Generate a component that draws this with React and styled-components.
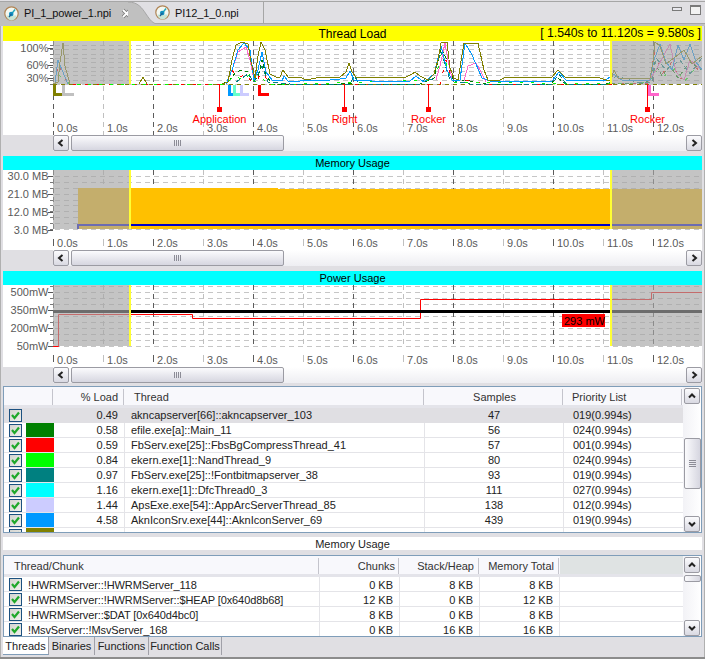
import React from "react";
import styled, { createGlobalStyle } from "styled-components";

const GlobalStyle = createGlobalStyle`
  html, body { margin: 0; padding: 0; background: #e0dfe3; }
  * { box-sizing: border-box; }
`;

const UI_FONT = `"Liberation Sans", Arial, sans-serif`;
const GRID = "#c6c6c6";
const DARK_TICK = "#5c5c5c";

// shared x axis, 50px per second starting at x=53
const seconds = Array.from({ length: 14 }, (_, i) => i);
const tickX = (s) => 53 + s * 50;

const threadLines = [
  { color: "#008000", dash: "4 3", pts: "222,84 230,80 236,72 242,70 248,72 252,80 258,78 262,60 266,75 272,84 340,84 346,83 352,84 420,84 434,78 441,48 448,62 453,80 470,81 486,84 550,84 558,78 566,84 606,84 612,83 640,84 650,80 654,62 662,76 670,66 678,78 690,62 702,70" },
  { color: "#ff0000", dash: "3 9", pts: "55,84 58,64 62,72 68,84 226,84 232,70 238,78 246,74 252,82 258,80 262,66 268,84 300,84 440,84 446,60 452,80 470,80 486,84 620,84 650,83 654,52 662,74 672,62 680,80 690,64 702,72" },
  { color: "#00ff00", dash: "3 8", pts: "55,84 58,74 64,80 70,84 226,84 234,76 244,80 250,74 255,82 262,78 268,84 300,84 436,80 441,50 447,66 452,82 620,84 650,82 654,70 664,76 676,68 684,82 694,70 702,66" },
  { color: "#008080", dash: "5 3", pts: "236,82 248,74 254,82 262,66 268,82 290,84 350,84 354,76 360,84 420,84 426,78 432,80 441,52 450,80 470,84 552,84 559,74 566,84 608,84 616,76 640,83 652,82 656,58 666,70 680,60 690,74 702,58" },
  { color: "#ff66cc", pts: "232,70 238,52 246,47 250,60 254,80 M436,80 436,80 440,66 445,43 448,60 452,78 M464,81 464,81 468,66 476,63 481,72 486,82 M648,82 656,70 664,55 670,44 676,72 684,80 690,60 702,70" },
  { color: "#0099ff", pts: "55,82 58,60 62,70 68,84 M226,84 232,70 238,50 244,43 250,50 254,80 258,70 262,52 266,72 272,80 282,81 284,76 288,81 300,81 312,80 330,80 340,79 346,78 350,71 354,80 372,81 410,81 416,76 424,82 434,74 441,46 447,70 452,80 460,80 465,43 472,55 482,78 490,81 552,81 559,72 566,80 606,80 614,74 622,80 650,80 654,60 660,44 666,62 672,70 678,45 684,60 690,44 696,62 702,70" },
  { color: "#808000", pts: "53,84 58,82 60,62 63,43 65,66 70,84 M139,84 143,77 147,84 M222,84 228,82 232,60 236,45 242,42 248,44 251,62 255,78 258,56 261,42 265,50 270,74 276,77 280,77 283,70 288,77 300,77 306,80 316,78 340,77 346,72 349,63 352,72 356,77 406,77 412,74 415,72 420,76 428,80 434,74 438,60 441,43 447,42 450,68 454,78 458,80 464,43 478,43 484,70 488,80 500,80 506,77 552,77 558,70 565,77 600,78 606,80 611,80 614,70 618,78 650,78 653,62 655,42 660,46 666,64 674,58 684,50 692,64 702,56" },
];

const markers = [
  { x: 219, label: "Application" },
  { x: 344, label: "Right" },
  { x: 428, label: "Rocker" },
  { x: 647, label: "Rocker" },
];

const starts = [
  { x: 54, end: 63, color: "#808000" },
  { x: 63, end: 74, color: "#c0c0c0" },
  { x: 229, end: 239, color: "#0099ff" },
  { x: 234, end: 240, color: "#66ffcc" },
  { x: 241, end: 249, color: "#ccccff" },
  { x: 259, end: 269, color: "#ff0000" },
  { x: 649, end: 659, color: "#ff66cc" },
];

const threadRows = [
  { color: null, load: "0.49", name: "akncapserver[66]::akncapserver_103", samples: 47, prio: "019(0.994s)", selected: true },
  { color: "#008000", load: "0.58", name: "efile.exe[a]::Main_11", samples: 56, prio: "024(0.994s)" },
  { color: "#ff0000", load: "0.59", name: "FbServ.exe[25]::FbsBgCompressThread_41", samples: 57, prio: "001(0.994s)" },
  { color: "#00ff00", load: "0.84", name: "ekern.exe[1]::NandThread_9", samples: 80, prio: "024(0.994s)" },
  { color: "#008080", load: "0.97", name: "FbServ.exe[25]::!Fontbitmapserver_38", samples: 93, prio: "019(0.994s)" },
  { color: "#00ffff", load: "1.16", name: "ekern.exe[1]::DfcThread0_3", samples: 111, prio: "027(0.994s)" },
  { color: "#ccccff", load: "1.44", name: "ApsExe.exe[54]::AppArcServerThread_85", samples: 138, prio: "012(0.994s)" },
  { color: "#0099ff", load: "4.58", name: "AknIconSrv.exe[44]::AknIconServer_69", samples: 439, prio: "019(0.994s)" },
  { color: "#808000", load: "", name: "", samples: "", prio: "" },
];

const chunkRows = [
  { name: "!HWRMServer::!HWRMServer_118", chunks: "0 KB", heap: "8 KB", total: "8 KB" },
  { name: "!HWRMServer::!HWRMServer::$HEAP [0x640d8b68]", chunks: "12 KB", heap: "0 KB", total: "12 KB" },
  { name: "!HWRMServer::$DAT [0x640d4bc0]", chunks: "8 KB", heap: "0 KB", total: "8 KB" },
  { name: "!MsvServer::!MsvServer_168", chunks: "0 KB", heap: "16 KB", total: "16 KB" },
  { name: "", chunks: "", heap: "", total: "" },
];

const Window = styled.div`
  width: 705px;
  height: 659px;
  display: flex;
  flex-direction: column;
  overflow: hidden;
  background: #e0dfe3;
  font-family: ${UI_FONT};
  font-size: 11px;
  color: #222;
  border-bottom: 2px solid #8c8c8c;
`;

const TabBar = styled.div`
  height: 23px;
  flex: none;
  display: flex;
  margin-top: 1px;
  border-top: 1px solid #a6a6a6;
  border-bottom: 1px solid #a6a6a6;
`;

const ActiveTab = styled.div`
  width: 128px;
  margin-bottom: -1px;
  display: flex;
  align-items: center;
  gap: 5px;
  padding-left: 4px;
  background: #c0c0c0;
`;

const TabCurve = styled.svg`
  flex: none;
  width: 30px;
  height: 22px;
  margin-bottom: -1px;
`;

const InactiveTab = styled.div`
  width: 112px;
  margin-left: -6px;
  display: flex;
  align-items: center;
  gap: 5px;
  padding-left: 3px;
  border-right: 1px solid #a6a6a6;
`;

const TabText = styled.span`
  font-size: 11px;
  letter-spacing: -0.1px;
  white-space: nowrap;
  color: #111;
`;

const TabIconImg = styled.svg`
  flex: none;
  width: 15px;
  height: 15px;
`;

const CloseIcon = styled.svg`
  flex: none;
  width: 11px;
  height: 11px;
  margin-left: 5px;
`;

const WindowButtons = styled.div`
  margin-left: auto;
  display: flex;
  align-items: flex-start;
  gap: 8px;
  padding: 3px 4px 0 0;
`;

const MinButton = styled.div`
  width: 10px;
  height: 4px;
  margin-top: 2px;
  background: #e8e8ee;
  border: 1px solid #7a7a7a;
`;

const MaxButton = styled.div`
  width: 11px;
  height: 10px;
  background: #f2f2f2;
  border: 1px solid #7a7a7a;
  border-top-width: 2px;
`;

const Strip = styled.div`
  height: 2px;
  flex: none;
  background: #c0c0c0;
`;

const Content = styled.div`
  flex: 1;
  display: flex;
  flex-direction: column;
  padding: 0 2px 0 3px;
  border-left: 1px solid #b0b0b0;
  border-right: 1px solid #b0b0b0;
  min-height: 0;
`;

const ChartBlock = styled.section`
  flex: none;
  margin-left: -1px;
  margin-bottom: ${(p) => p.$gap}px;
`;

const TitleBar = styled.div`
  height: ${(p) => p.$height}px;
  display: grid;
  grid-template-columns: 1fr auto 1fr;
  align-items: center;
  background: ${(p) => p.$color};
  color: #000;
  font-size: ${(p) => p.$size}px;
  line-height: 1;
  white-space: nowrap;
`;

const TitleText = styled.span`
  grid-column: 2;
`;

const RangeText = styled.span`
  grid-column: 3;
  justify-self: end;
  padding-right: 1px;
  font-size: 12.25px;
`;

const ChartSvg = styled.svg`
  display: block;
  width: 699px;
  height: ${(p) => p.$height}px;
  background: #fff;
  font-family: ${UI_FONT};
  font-size: 11px;
`;

const HScroll = styled.div`
  height: 16px;
  display: flex;
  margin-left: 50px;
  background: linear-gradient(#ffffff, #eeeef2);
`;

const ScrollButton = styled.div`
  flex: none;
  width: 16px;
  height: 16px;
  display: flex;
  align-items: center;
  justify-content: center;
  background: linear-gradient(#fbfbfd, #d9d9e2);
  border: 1px solid #9b9ba3;
  border-radius: 2px;
`;

const HThumb = styled.div`
  flex: none;
  width: 213px;
  margin-left: 2px;
  display: flex;
  align-items: center;
  justify-content: center;
  background: linear-gradient(#fbfbfd, #d6d6e0);
  border: 1px solid #9b9ba3;
  border-radius: 2px;
`;

const Grip = styled.div`
  width: 7px;
  height: 6px;
  background: repeating-linear-gradient(90deg, #8c8c96 0 1px, transparent 1px 2px);
`;

const ScrollSpacer = styled.div`
  flex: 1;
`;

const TablePanel = styled.section`
  flex: none;
  display: flex;
  height: ${(p) => p.$height}px;
  margin-left: -1px;
  background: #fff;
  border: 1px solid #7f9db9;
`;

const TableMain = styled.div`
  width: 679px;
  flex: none;
  overflow: hidden;
`;

const TableHeader = styled.div`
  height: 21px;
  display: grid;
  grid-template-columns: ${(p) => p.$cols};
  background: #f8f8fc;
  border-bottom: 3px solid #e4e4ea;
  color: #333;
`;

const HeadCell = styled.div`
  display: flex;
  align-items: center;
  justify-content: ${(p) => p.$justify || "flex-start"};
  padding: ${(p) => p.$pad || "0"};
  background: ${(p) => p.$bg || "transparent"};
  box-shadow: ${(p) => (p.$sep ? "inset -1px 0 0 #f8f8fc, inset -2px 0 0 #c4c4cc" : "none")};
  border-top: 2px solid ${(p) => p.$bg || "#f8f8fc"};
  white-space: nowrap;
`;

const Row = styled.div`
  height: 15px;
  display: grid;
  grid-template-columns: ${(p) => p.$cols};
  background: ${(p) => (p.$selected ? "#e0dfe3" : "#fff")};
  border-bottom: 1px solid ${(p) => (p.$selected ? "#e0dfe3" : "#e4e4e8")};
`;

const Cell = styled.div`
  display: flex;
  align-items: center;
  justify-content: ${(p) => p.$justify || "flex-start"};
  padding: ${(p) => p.$pad || "0"};
  height: 14px;
  border-right: 1px solid ${(p) => (p.$plain ? "transparent" : "#e4e4e8")};
  white-space: nowrap;
  overflow: hidden;
`;

const ChunkName = styled.span`
  margin: 1px 0 0 6px;
  letter-spacing: -0.1px;
`;

const Swatch = styled.div`
  height: 14px;
  background: ${(p) => p.$color || "transparent"};
`;

const CheckBox = styled.span`
  display: flex;
  align-items: center;
  justify-content: center;
  flex: none;
  width: 13px;
  height: 13px;
  margin-left: 5px;
  background: linear-gradient(135deg, #d4d4d0, #f0f0ec);
  border: 1px solid #1c5180;
`;

const VScroll = styled.div`
  flex: 1;
  display: flex;
  flex-direction: column;
  padding: 1px 0 0 1px;
  background: linear-gradient(90deg, #f2f2f6, #ffffff);
`;

const VThumb = styled.div`
  flex: none;
  height: ${(p) => p.$h}px;
  margin-top: ${(p) => p.$top}px;
  display: flex;
  align-items: center;
  justify-content: center;
  background: linear-gradient(90deg, #fbfbfd, #d6d6e0);
  border: 1px solid #9b9ba3;
  border-radius: 2px;
`;

const VGrip = styled.div`
  width: 7px;
  height: 7px;
  background: repeating-linear-gradient(0deg, #8c8c96 0 1px, transparent 1px 2px);
`;

const VSpacer = styled.div`
  flex: 1;
`;

const Band = styled.div`
  flex: none;
  height: 13px;
  margin: 4px 0 5px -1px;
  display: flex;
  align-items: center;
  justify-content: center;
  background: #fff;
  color: #222;
`;

const BottomTabs = styled.div`
  flex: none;
  height: 18px;
  display: flex;
  margin-left: -1px;
`;

const BottomTab = styled.div`
  display: flex;
  align-items: center;
  justify-content: center;
  width: ${(p) => p.$w}px;
  background: ${(p) => (p.$active ? "#fff" : "transparent")};
  border-right: 1px solid #a0a0a8;
  border-bottom: ${(p) => (p.$active ? "1px solid #7f9db9" : "none")};
  font-size: 11px;
  white-space: nowrap;
  color: #222;
`;

function Chevron({ dir }) {
  const d = {
    left: "M6.5 2 L3 5 L6.5 8",
    right: "M3.5 2 L7 5 L3.5 8",
    up: "M2 6.5 L5 3.5 L8 6.5",
    down: "M2 3.5 L5 6.5 L8 3.5",
  }[dir];
  return (
    <svg width="10" height="10" viewBox="0 0 10 10">
      <path d={d} fill="none" stroke="#222" strokeWidth="2" />
    </svg>
  );
}

function GaugeIcon() {
  return (
    <TabIconImg viewBox="0 0 15 15">
      <circle cx="7.5" cy="7.5" r="6.7" fill="#f2f8f2" stroke="#b08454" strokeWidth="1.2" />
      <path d="M2.5 9.5 A5 5 0 0 0 12.5 9.5 Z" fill="#c8e4d4" />
      <path d="M7.5 8 L11 3.5" stroke="#20a8b8" strokeWidth="1.4" />
      <circle cx="7.2" cy="8" r="2.3" fill="#1090c0" />
      <path d="M5 11 L7.5 8" stroke="#1c5e90" strokeWidth="1.2" />
    </TabIconImg>
  );
}

function Check() {
  return (
    <svg width="11" height="11" viewBox="0 0 11 11">
      <path d="M2 5 L4.5 8 L9 2.5" fill="none" stroke="#1fa82a" strokeWidth="2.2" />
    </svg>
  );
}

function XGrid({ top, bottom }) {
  return (
    <g shapeRendering="crispEdges">
      {seconds.map((s) =>
        tickX(s) <= 702 ? (
          <line
            key={s}
            x1={tickX(s) + 0.5}
            x2={tickX(s) + 0.5}
            y1={top}
            y2={bottom}
            stroke={s % 2 ? "#c0c0c0" : DARK_TICK}
            strokeDasharray="5 4"
          />
        ) : null
      )}
    </g>
  );
}

function XTicks({ top, bottom }) {
  return (
    <g shapeRendering="crispEdges">
      {seconds.map((s) =>
        s <= 12 ? (
          <line
            key={s}
            x1={tickX(s) + 0.5}
            x2={tickX(s) + 0.5}
            y1={top}
            y2={bottom}
            stroke={s % 2 ? "#c0c0c0" : DARK_TICK}
          />
        ) : null
      )}
    </g>
  );
}

function TimeLabels({ y }) {
  return (
    <g fill="#5a5a5a">
      {seconds.map((s) =>
        s <= 12 ? (
          <text key={s} x={tickX(s) + 4} y={y}>
            {s}.0s
          </text>
        ) : null
      )}
    </g>
  );
}

function HLines({ from, step, count }) {
  const rows = Array.from({ length: count }, (_, i) => Math.round(from - step * i));
  return (
    <g shapeRendering="crispEdges">
      {rows.map((y) => (
        <g key={y}>
          <line x1="55" x2="702" y1={y + 0.5} y2={y + 0.5} stroke={GRID} strokeDasharray="5 4" />
          <line x1="50" x2="53" y1={y + 0.5} y2={y + 0.5} stroke="#777" />
        </g>
      ))}
    </g>
  );
}

function YLabels({ items }) {
  return (
    <g fill="#5a5a5a" textAnchor="end">
      {items.map(([label, y]) => (
        <g key={label}>
          <text x="48.5" y={y + 4}>
            {label}
          </text>
          <rect x="48" y={y} width="5" height="1" fill="#555" />
        </g>
      ))}
    </g>
  );
}

function Shade({ top, bottom }) {
  return (
    <g>
      <rect x="53" y={top} width="76" height={bottom - top} fill="#a5a5a5" opacity="0.655" />
      <rect x="129" y={top} width="2" height={bottom - top} fill="#ffff33" />
      <rect x="612" y={top} width="90" height={bottom - top} fill="#a5a5a5" opacity="0.655" />
      <rect x="610" y={top} width="2" height={bottom - top} fill="#ffff33" />
    </g>
  );
}

function ThreadChart() {
  return (
    <ChartSvg $height={94} viewBox="3 41 699 94">
      <HLines from={84} step={4.33} count={10} />
      <XGrid top={41} bottom={135} />
      <g shapeRendering="crispEdges">
        <line x1="53" x2="702" y1="84.5" y2="84.5" stroke="#808000" strokeDasharray="4 4" />
        {threadLines.map((l) =>
          l.pts.split(" M").map((pts, i) => (
            <polyline
              key={l.color + i}
              points={pts}
              fill="none"
              stroke={l.color}
              strokeDasharray={l.dash}
            />
          ))
        )}
      </g>
      <Shade top={41} bottom={84} />
      <g shapeRendering="crispEdges">
        {starts.map((m) => (
          <path key={m.x} d={`M${m.x} 85 V94.5 H${m.end}`} fill="none" stroke={m.color} strokeWidth="3" />
        ))}
      </g>
      {markers.map((m) => (
        <g key={m.x} fill="#ff0000">
          <rect x={m.x} y="84" width="1" height="24" />
          <rect x={m.x - 2} y="107" width="5" height="5" />
          <text x={m.x + 0.5} y="123" textAnchor="middle">
            {m.label}
          </text>
        </g>
      ))}
      <YLabels
        items={[
          ["100%", 48],
          ["60%", 65],
          ["30%", 78],
        ]}
      />
      <TimeLabels y={132} />
    </ChartSvg>
  );
}

function MemoryChart() {
  return (
    <ChartSvg $height={80} viewBox="3 170 699 80">
      <HLines from={229} step={5.9} count={10} />
      <XGrid top={170} bottom={229} />
      <path d="M78 188 H278 V189 H702 V229 H78 Z" fill="#ffc000" />
      <rect x="78" y="224" width="624" height="2" fill="#0000c8" />
      <rect x="77" y="224" width="2" height="5" fill="#0000c8" />
      <Shade top={170} bottom={229} />
      <YLabels
        items={[
          ["30.0 MB", 176],
          ["21.0 MB", 194],
          ["12.0 MB", 212],
          ["3.0 MB", 230],
        ]}
      />
      <XTicks top={239} bottom={246} />
      <TimeLabels y={247} />
    </ChartSvg>
  );
}

function PowerChart() {
  return (
    <ChartSvg $height={82} viewBox="3 285 699 82">
      <HLines from={346} step={6} count={11} />
      <XGrid top={285} bottom={347} />
      <polyline
        points="53,346.5 58.5,346.5 58.5,314.5 192.5,314.5 192.5,318.5 420.5,318.5 420.5,299.5 651.5,299.5 651.5,292.5 702,292.5"
        fill="none"
        stroke="#ff0000"
      />
      <rect x="53" y="310" width="649" height="3" fill="#000" />
      <Shade top={285} bottom={346} />
      <g>
        <rect x="562" y="314" width="43" height="13" fill="#ff0000" />
        <text x="564" y="325" fill="#000">
          293 mW
        </text>
      </g>
      <YLabels
        items={[
          ["500mW", 292],
          ["350mW", 310],
          ["200mW", 328],
          ["50mW", 346],
        ]}
      />
      <XTicks top={355} bottom={362} />
      <TimeLabels y={364} />
    </ChartSvg>
  );
}

function HorizontalBar() {
  return (
    <HScroll>
      <ScrollButton>
        <Chevron dir="left" />
      </ScrollButton>
      <HThumb>
        <Grip />
      </HThumb>
      <ScrollSpacer />
      <ScrollButton>
        <Chevron dir="right" />
      </ScrollButton>
    </HScroll>
  );
}

function VerticalBar({ thumbTop, thumbHeight, grip }) {
  return (
    <VScroll>
      <ScrollButton>
        <Chevron dir="up" />
      </ScrollButton>
      <VThumb $top={thumbTop} $h={thumbHeight}>
        {grip && <VGrip />}
      </VThumb>
      <VSpacer />
      <ScrollButton>
        <Chevron dir="down" />
      </ScrollButton>
    </VScroll>
  );
}

const threadCols = "22px 28px 71px 300px 139px 119px";
const chunkCols = "316px 80px 80px 80px 123px";

export default function App() {
  return (
    <>
      <GlobalStyle />
      <Window>
        <TabBar>
          <ActiveTab>
            <GaugeIcon />
            <TabText>PI_1_power_1.npi</TabText>
            <CloseIcon viewBox="0 0 11 11">
              <path d="M2 2 L9 9 M9 2 L2 9" stroke="#777" strokeWidth="3.4" />
              <path d="M2 2 L9 9 M9 2 L2 9" stroke="#fff" strokeWidth="1.8" />
            </CloseIcon>
          </ActiveTab>
          <TabCurve viewBox="0 0 30 22">
            <path d="M0 0 C10 0 14 6 18 12 C22 18 25 22 30 22 H0 Z" fill="#c0c0c0" />
            <path d="M0 0 C10 0 14 6 18 12 C22 18 25 22 30 22" fill="none" stroke="#a6a6a6" />
          </TabCurve>
          <InactiveTab>
            <GaugeIcon />
            <TabText>PI12_1_0.npi</TabText>
          </InactiveTab>
          <WindowButtons>
            <MinButton />
            <MaxButton />
          </WindowButtons>
        </TabBar>
        <Strip />
        <Content>
          <ChartBlock $gap={5}>
            <TitleBar $color="#ffff00" $height={15} $size={12}>
              <TitleText>Thread Load</TitleText>
              <RangeText>[ 1.540s to 11.120s = 9.580s ]</RangeText>
            </TitleBar>
            <ThreadChart />
            <HorizontalBar />
          </ChartBlock>
          <ChartBlock $gap={5}>
            <TitleBar $color="#00ffff" $height={14} $size={11}>
              <TitleText>Memory Usage</TitleText>
            </TitleBar>
            <MemoryChart />
            <HorizontalBar />
          </ChartBlock>
          <ChartBlock $gap={3}>
            <TitleBar $color="#00ffff" $height={14} $size={11}>
              <TitleText>Power Usage</TitleText>
            </TitleBar>
            <PowerChart />
            <HorizontalBar />
          </ChartBlock>

          <TablePanel $height={147}>
            <TableMain>
              <TableHeader $cols={threadCols}>
                <HeadCell />
                <HeadCell $sep />
                <HeadCell $sep $justify="flex-end" $pad="0 7px 0 0">
                  % Load
                </HeadCell>
                <HeadCell $sep $pad="0 0 0 9px">
                  Thread
                </HeadCell>
                <HeadCell $sep $justify="center">
                  Samples
                </HeadCell>
                <HeadCell $sep $pad="0 0 0 8px">
                  Priority List
                </HeadCell>
              </TableHeader>
              {threadRows.map((r, i) => (
                <Row key={i} $cols={threadCols} $selected={r.selected}>
                  <Cell $plain>
                    <CheckBox>
                      <Check />
                    </CheckBox>
                  </Cell>
                  <Swatch $color={r.color} />
                  <Cell $plain={r.selected} $justify="flex-end" $pad="0 6px 0 0">
                    {r.load}
                  </Cell>
                  <Cell $plain={r.selected} $pad="0 0 0 6px">
                    {r.name}
                  </Cell>
                  <Cell $plain={r.selected} $justify="center">
                    {r.samples}
                  </Cell>
                  <Cell $plain $pad="0 0 0 9px">
                    {r.prio}
                  </Cell>
                </Row>
              ))}
            </TableMain>
            <VerticalBar thumbTop={34} thumbHeight={51} grip />
          </TablePanel>

          <Band>Memory Usage</Band>

          <TablePanel $height={82}>
            <TableMain>
              <TableHeader $cols={chunkCols}>
                <HeadCell $sep $pad="0 0 0 10px">
                  Thread/Chunk
                </HeadCell>
                <HeadCell $sep $justify="flex-end" $pad="0 5px 0 0">
                  Chunks
                </HeadCell>
                <HeadCell $sep $justify="flex-end" $pad="0 6px 0 0">
                  Stack/Heap
                </HeadCell>
                <HeadCell $sep $justify="flex-end" $pad="0 6px 0 0">
                  Memory Total
                </HeadCell>
                <HeadCell $bg="#dfe3e3" />
              </TableHeader>
              {chunkRows.map((r, i) => (
                <Row key={i} $cols={chunkCols}>
                  <Cell>
                    <CheckBox>
                      <Check />
                    </CheckBox>
                    <ChunkName>{r.name}</ChunkName>
                  </Cell>
                  <Cell $justify="flex-end" $pad="1px 6px 0 0">
                    {r.chunks}
                  </Cell>
                  <Cell $justify="flex-end" $pad="1px 6px 0 0">
                    {r.heap}
                  </Cell>
                  <Cell $justify="flex-end" $pad="1px 6px 0 0">
                    {r.total}
                  </Cell>
                  <Cell $plain />
                </Row>
              ))}
            </TableMain>
            <VerticalBar thumbTop={2} thumbHeight={7} />
          </TablePanel>

          <BottomTabs>
            <BottomTab $active $w={46}>Threads</BottomTab>
            <BottomTab $w={46}>Binaries</BottomTab>
            <BottomTab $w={54}>Functions</BottomTab>
            <BottomTab $w={73}>Function Calls</BottomTab>
          </BottomTabs>
        </Content>
      </Window>
    </>
  );
}
